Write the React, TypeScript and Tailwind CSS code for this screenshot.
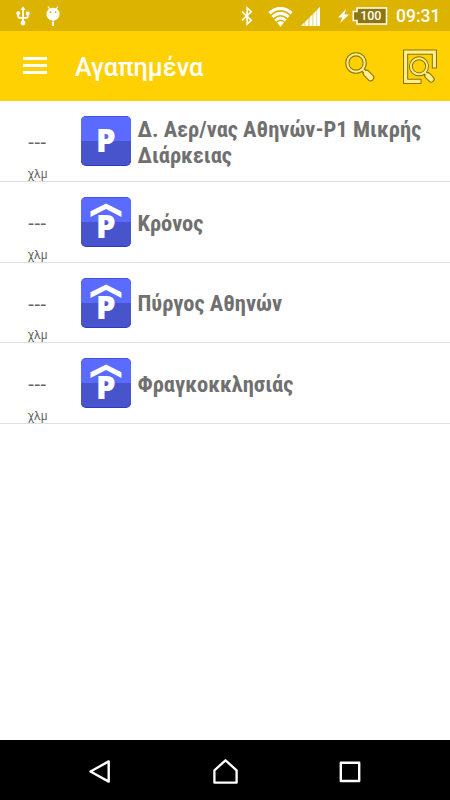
import React from 'react'

interface Parking {
  id: number
  name: string
  covered: boolean
  rowClass: string
  nameClass: string
}

const favorites: Parking[] = [
  { id: 1, name: 'Δ. Αερ/νας Αθηνών-P1 Μικρής Διάρκειας', covered: false, rowClass: 'h-[81px]', nameClass: 'w-[312px] pt-px' },
  { id: 2, name: 'Κρόνος', covered: true, rowClass: 'h-[81px]', nameClass: 'whitespace-nowrap pt-[2px]' },
  { id: 3, name: 'Πύργος Αθηνών', covered: true, rowClass: 'h-[80px]', nameClass: 'whitespace-nowrap pt-px' },
  { id: 4, name: 'Φραγκοκκλησιάς', covered: true, rowClass: 'h-[81px]', nameClass: 'whitespace-nowrap pt-[2px]' },
]

const UsbIcon: React.FC = () => (
  <svg className="w-[14px] h-[20px]" viewBox="0 0 14 20" fill="none" stroke="#fff" strokeWidth="1.8">
    <path d="M7 3v13M2.2 8.5v1.8q0 1.6 1.6 1.6H7M11.8 8.5v1.8q0 1.6-1.6 1.6H7" />
    <path d="M7 .2 9.5 4h-5z" fill="#fff" stroke="none" />
    <path d="M10 5.6h3.6v3.2H10z" fill="#fff" stroke="none" />
    <circle cx="2.2" cy="7.2" r="1.9" fill="#fff" stroke="none" />
    <circle cx="7" cy="17" r="2.4" fill="#fff" stroke="none" />
  </svg>
)

const DebugIcon: React.FC = () => (
  <svg className="w-[14px] h-[20px]" viewBox="0 0 14 20" fill="#fff">
    <path d="M2 .6 4.4 3.6M12 .6 9.6 3.6" stroke="#fff" strokeWidth="1.2" />
    <circle cx="7" cy="8.2" r="6.5" />
    <rect x="6" y="15.4" width="2" height="4.6" />
    <circle cx="4.3" cy="6.2" r=".9" fill="#dcb400" />
    <circle cx="9.7" cy="6.2" r=".9" fill="#dcb400" />
  </svg>
)

const BluetoothIcon: React.FC = () => (
  <svg className="w-[12px] h-[20px]" viewBox="0 0 12 20" fill="none" stroke="#fff" strokeWidth="1.7">
    <path d="M1 5.6 10.2 14.2 6.2 18V2l4 3.8L1 14.4" />
  </svg>
)

const WifiIcon: React.FC = () => (
  <svg className="w-[25px] h-[20px]" viewBox="0 0 25 20" fill="none" stroke="#fff">
    <path d="M1.4 6.2Q12.5-3.2 23.6 6.2" strokeWidth="3.1" />
    <path d="M4.4 10Q12.5 2.8 20.6 10" strokeWidth="3" />
    <path d="M7.2 13.4Q12.5 8.6 17.8 13.4" strokeWidth="2.7" />
    <path d="M9 15.6Q12.5 12.8 16 15.6L12.5 19.7z" fill="#fff" stroke="none" />
  </svg>
)

const SignalIcon: React.FC = () => (
  <svg className="w-[19px] h-[19px]" viewBox="0 0 19 19">
    <path d="M0 19 19 0V19z" fill="#fff" fillOpacity=".6" />
    <path d="M.5 19v-.5l2.5-2.5v3zM4.5 19v-4.5l2.5-2.5v7zM8.7 19v-8.7l2.4-2.4V19zM12.6 19V6.4l2.4-2.4V19zM16.2 19V2.8L19 0v19z" fill="#fff" />
  </svg>
)

const BatteryIcon: React.FC = () => (
  <svg className="w-[36px] h-[18px]" viewBox="0 0 36 18">
    <path d="M5 1h29.5v16H5v-3.5H1.3v-9H5z" fill="#8f760c" stroke="#fff" strokeWidth="1.5" />
    <text x="18.8" y="13.4" textAnchor="middle" fill="#fff" className="font-[Roboto] text-[12.5px] font-medium">100</text>
  </svg>
)

const SearchIcon: React.FC = () => (
  <svg className="w-[30px] h-[30px]" viewBox="0 0 30 30" fill="none">
    <path d="m17 17 3.5 3.5" stroke="#8b7500" strokeWidth="4" />
    <path d="m21.4 21.4 4.2 4.2" stroke="#8b7500" strokeWidth="7.4" strokeLinecap="round" />
    <circle cx="11" cy="11" r="8.7" stroke="#8b7500" strokeWidth="4.2" />
    <circle cx="11" cy="11" r="8.7" stroke="#ffee8c" strokeWidth="2.1" />
    <path d="m17.5 17.5 3 3" stroke="#ffee8c" strokeWidth="1.8" />
    <path d="m21.4 21.4 4.2 4.2" stroke="#ffee8c" strokeWidth="5.2" strokeLinecap="round" />
  </svg>
)

const AreaSearchIcon: React.FC = () => (
  <svg className="w-[36px] h-[36px]" viewBox="0 0 36 36" fill="none">
    <path d="M32.4 19.5V3.1H3.6v29.3h15.9" stroke="#8b7500" strokeWidth="5.2" />
    <path d="M32.4 18.5V3.1H3.6v29.3h14.9" stroke="#ffee8c" strokeWidth="3.1" />
    <path d="m21.5 23 3 3" stroke="#8b7500" strokeWidth="4" />
    <path d="m25.8 26.7 3.4 3.4" stroke="#8b7500" strokeWidth="7" strokeLinecap="round" />
    <circle cx="17" cy="17.3" r="8.1" stroke="#8b7500" strokeWidth="3.9" />
    <circle cx="17" cy="17.3" r="8.1" stroke="#ffee8c" strokeWidth="1.9" />
    <path d="m22.5 23.1 2 2" stroke="#ffee8c" strokeWidth="1.8" />
    <path d="m25.8 26.7 3.4 3.4" stroke="#ffee8c" strokeWidth="4.8" strokeLinecap="round" />
  </svg>
)

const ParkingIcon: React.FC<{ covered: boolean }> = ({ covered }) => (
  <svg className="w-[50px] h-[50px] flex-shrink-0" viewBox="0 0 50 50">
    <rect width="50" height="50" rx="5" fill="#2a3cc0" />
    <path d="M0 25V5.5Q0 .5 5 .5h40q5 0 5 5V25z" fill="#5b6aff" />
    <path d="M0 25h50v19q0 5-5 5H5q-5 0-5-5z" fill="#4854cc" />
    {covered && <path d="M9.5 14.2 25 6.4l15.5 7.8v5.7L25 12 9.5 19.9z" fill="#fff" />}
    <text
      x={24.7}
      y={covered ? 41 : 36}
      textAnchor="middle"
      fill="#fff"
      className="font-['Open_Sans'] text-[31px] font-extrabold"
    >
      P
    </text>
  </svg>
)

const StatusBar: React.FC = () => (
  <div className="h-[31px] bg-[#dcb400] flex items-center">
    <div className="flex items-center gap-4 pl-[15.5px] pt-px">
      <UsbIcon />
      <DebugIcon />
    </div>
    <div className="flex items-center ml-auto pr-[10px]">
      <BluetoothIcon />
      <div className="ml-[15px] pt-[2px]"><WifiIcon /></div>
      <div className="ml-2 pt-[2px]"><SignalIcon /></div>
      <svg className="w-[11px] h-[16px] ml-[18px]" viewBox="0 0 11 16">
        <path d="M8 1 0 9.5h4.2L2.2 15 11 6.5H6.4z" fill="#fff" />
      </svg>
      <div className="ml-[3px]"><BatteryIcon /></div>
      <span className="ml-[8px] w-[44px] pt-[3px] whitespace-nowrap text-[17.5px] leading-none font-medium text-white">09:31</span>
    </div>
  </div>
)

const App: React.FC = () => (
  <div className="w-[450px] h-[800px] flex flex-col overflow-hidden bg-white font-[Roboto,sans-serif]">
    <StatusBar />

    {/* Toolbar */}
    <header className="h-[70px] bg-[#ffd103] flex items-center pl-[23px] pr-[12px]">
      <button className="w-6 flex flex-col gap-1 pb-px">
        <span className="h-[3px] bg-white" />
        <span className="h-[3px] bg-white" />
        <span className="h-[3px] bg-white" />
      </button>
      <h1 className="ml-7 pt-[4px] text-[25.2px] leading-none font-medium text-white">Αγαπημένα</h1>
      <button className="ml-auto pt-px"><SearchIcon /></button>
      <button className="ml-[27px] pt-px"><AreaSearchIcon /></button>
    </header>

    {/* Favorites */}
    <main className="flex-1">
      {favorites.map(p => (
        <div key={p.id} className={`${p.rowClass} flex border-b border-[#e0e0e0]`}>
          <div className="w-[75px] flex flex-col items-center text-[#666]">
            <span className="pt-[30.5px] text-[20px] leading-5 tracking-[0.6px]">---</span>
            <span className="mt-auto text-[12px] leading-[13px]">χλμ</span>
          </div>
          <div className="pl-[6px] flex items-center">
            <ParkingIcon covered={p.covered} />
            <div className={`${p.nameClass} ml-[6.5px] font-['Roboto_Condensed',Roboto,sans-serif] text-[22.5px] leading-[26px] font-bold text-[#707070]`}>
              {p.name}
            </div>
          </div>
        </div>
      ))}
    </main>

    {/* Navigation bar */}
    <nav className="h-[60px] bg-black flex items-center justify-between pl-[88px] pr-[89px] pt-1">
      <svg className="w-[24px] h-[26px]" viewBox="0 0 24 26" fill="none" stroke="#fff" strokeWidth="2.4" strokeLinejoin="round">
        <path d="M20.7 2.4v20.2L2.5 12.5z" />
      </svg>
      <svg className="w-[26px] h-[26px]" viewBox="0 0 26 26" fill="none" stroke="#fff" strokeWidth="2.3" strokeLinejoin="round">
        <path d="M1.4 11.3 12.5 1.3l11.1 10v12.4H1.4z" />
      </svg>
      <svg className="w-[22px] h-[22px]" viewBox="0 0 22 22" fill="none" stroke="#fff" strokeWidth="2.4" strokeLinejoin="round">
        <rect x="1.8" y="1.8" width="18.4" height="18.2" />
      </svg>
    </nav>
  </div>
)

export default App
